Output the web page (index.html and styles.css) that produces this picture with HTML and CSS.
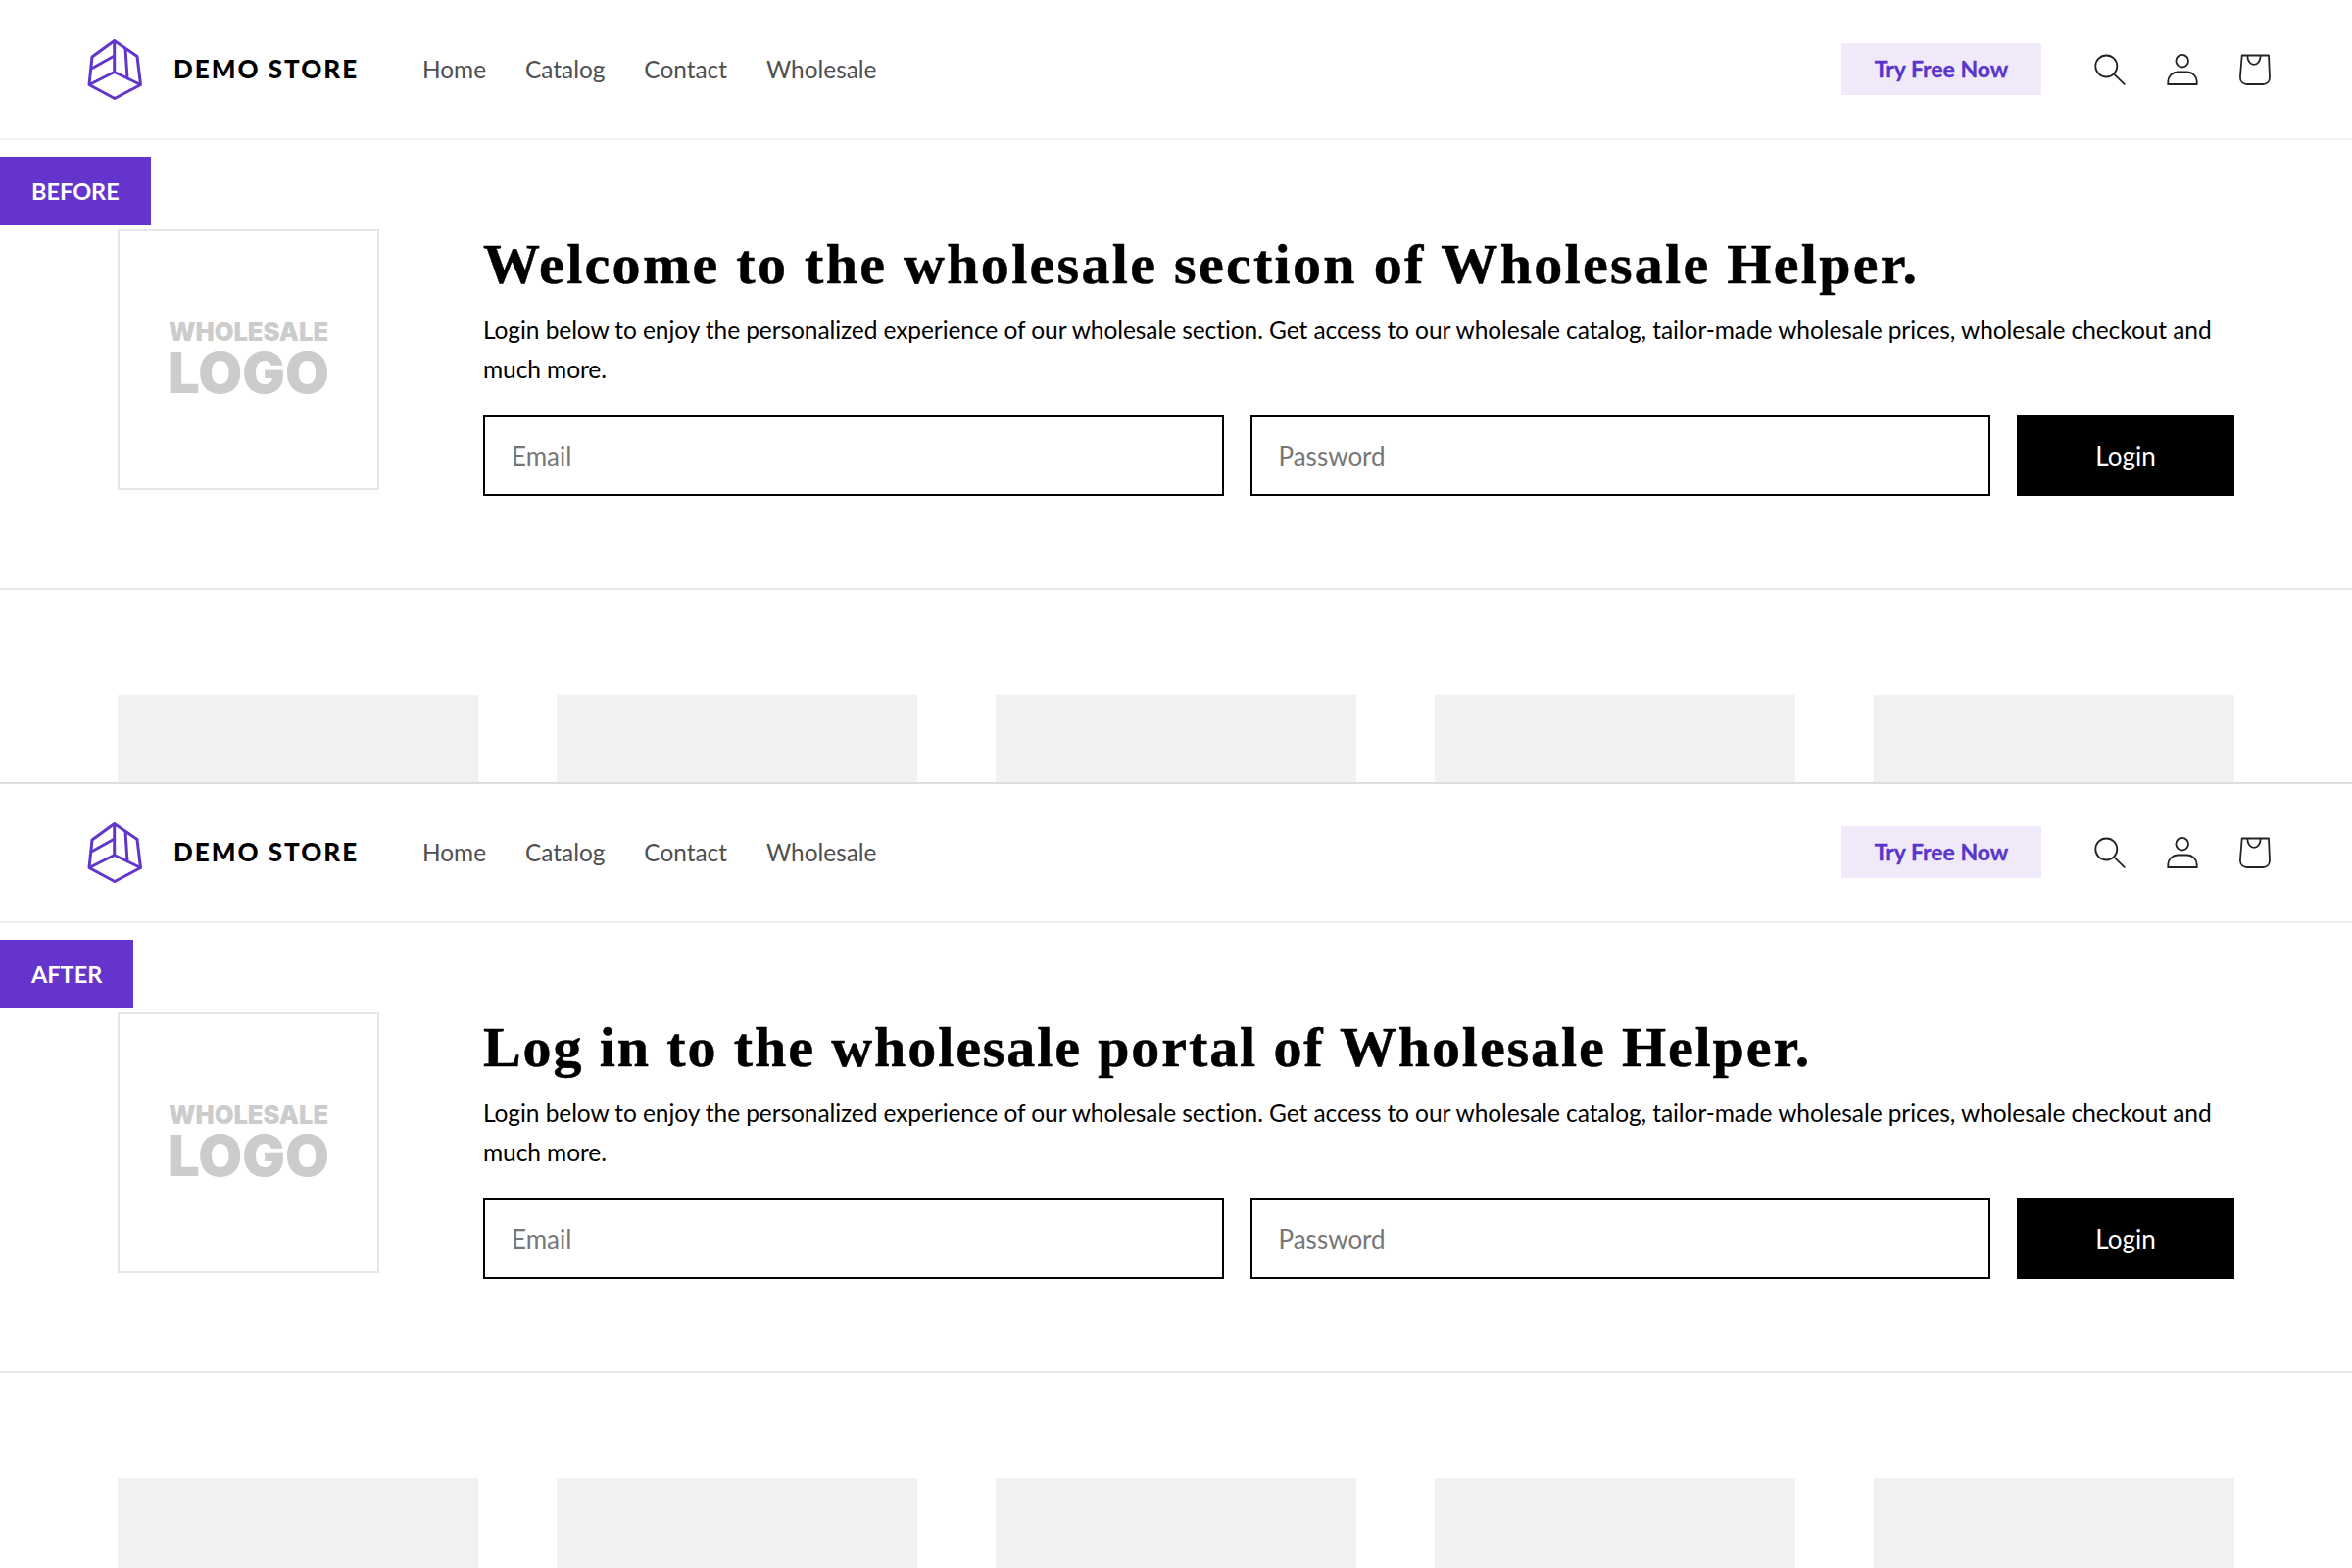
FILE: index.html
```html
<!DOCTYPE html>
<html lang="en">
<head>
    <meta charset="UTF-8">
    <meta name="viewport" content="width=device-width, initial-scale=1.0">
    <link rel="stylesheet" href="styles.css">
    <title>Wholesale login before and after</title>
</head>
<body>
    <svg class="sprites" width="0" height="0">
        <symbol id="icon-logo" viewBox="0 0 72 72">
            <path d="M36.700 7.500 60 23.500 63.500 52.500 37 66.500 11 52.500 14 24Z M36.700 7.500V39.500M11 52.500 36.700 39.500 63.500 52.500M12.500 36.500 36.700 23M48 15.500 50 46" fill="none" stroke="#6137c9" stroke-width="3" stroke-linejoin="round"/>
        </symbol>
        <symbol id="icon-search" viewBox="0 0 32 32">
            <circle cx="12.300" cy="12.500" r="11" fill="none" stroke="#222" stroke-width="1.800"/>
            <path d="M20.200 20.700 30.700 30.800" fill="none" stroke="#222" stroke-width="1.800" stroke-linecap="round"/>
        </symbol>
        <symbol id="icon-user" viewBox="0 0 32 32">
            <circle cx="15.700" cy="7.200" r="6.300" fill="none" stroke="#222" stroke-width="1.800"/>
            <path d="M1.300 31V28C1.300 23 6 18.500 11 18.500H21C26 18.500 30.700 23 30.700 28V31Z" fill="none" stroke="#222" stroke-width="1.800"/>
        </symbol>
        <symbol id="icon-bag" viewBox="0 0 32 32">
            <path d="M2.700 1.500H30L31 24C31 28.500 28 31 24 31H8C4 31 .9 28.500 .9 24Z" fill="none" stroke="#222" stroke-width="1.800" stroke-linejoin="round"/>
            <path d="M8.300 1.500C8.300 14 21.700 14 21.700 1.500" fill="none" stroke="#222" stroke-width="1.800"/>
        </symbol>
    </svg>

    <section class="panel panel-before">
        <div class="tag">BEFORE</div>
        <header class="topbar">
            <svg class="brand-mark"><use href="#icon-logo"></use></svg>
            <span class="brand-name">DEMO STORE</span>
            <nav class="menu">
                <a href="#">Home</a>
                <a href="#">Catalog</a>
                <a href="#">Contact</a>
                <a href="#">Wholesale</a>
            </nav>
            <a class="try-btn" href="#">Try Free Now</a>
            <div class="tools">
                <svg class="tool"><use href="#icon-search"></use></svg>
                <svg class="tool"><use href="#icon-user"></use></svg>
                <svg class="tool"><use href="#icon-bag"></use></svg>
            </div>
        </header>
        <div class="hero">
            <div class="logo-box">
                <span class="logo-small">WHOLESALE</span>
                <span class="logo-big">LOGO</span>
            </div>
            <div class="hero-main">
                <h1>Welcome to the wholesale section of Wholesale Helper.</h1>
                <p>Login below to enjoy the personalized experience of our wholesale section. Get access to our wholesale catalog, tailor-made wholesale prices, wholesale checkout and much more.</p>
                <form class="login">
                    <input type="text" placeholder="Email">
                    <input type="password" placeholder="Password">
                    <button type="button">Login</button>
                </form>
            </div>
        </div>
        <div class="cards">
            <div></div><div></div><div></div><div></div><div></div>
        </div>
    </section>

    <section class="panel panel-after">
        <div class="tag">AFTER</div>
        <header class="topbar">
            <svg class="brand-mark"><use href="#icon-logo"></use></svg>
            <span class="brand-name">DEMO STORE</span>
            <nav class="menu">
                <a href="#">Home</a>
                <a href="#">Catalog</a>
                <a href="#">Contact</a>
                <a href="#">Wholesale</a>
            </nav>
            <a class="try-btn" href="#">Try Free Now</a>
            <div class="tools">
                <svg class="tool"><use href="#icon-search"></use></svg>
                <svg class="tool"><use href="#icon-user"></use></svg>
                <svg class="tool"><use href="#icon-bag"></use></svg>
            </div>
        </header>
        <div class="hero">
            <div class="logo-box">
                <span class="logo-small">WHOLESALE</span>
                <span class="logo-big">LOGO</span>
            </div>
            <div class="hero-main">
                <h1>Log in to the wholesale portal of Wholesale Helper.</h1>
                <p>Login below to enjoy the personalized experience of our wholesale section. Get access to our wholesale catalog, tailor-made wholesale prices, wholesale checkout and much more.</p>
                <form class="login">
                    <input type="text" placeholder="Email">
                    <input type="password" placeholder="Password">
                    <button type="button">Login</button>
                </form>
            </div>
        </div>
        <div class="cards">
            <div></div><div></div><div></div><div></div><div></div>
        </div>
    </section>
</body>
</html>
```

FILE: styles.css
```css
* {
    box-sizing: border-box;
}

body {
    margin: 0;
    background: #fff;
    color: #000;
    font-family: Lato, "Open Sans", sans-serif;
    font-size: 25px;
}

.sprites {
    display: block;
    height: 0;
}

.panel {
    position: relative;
    overflow: hidden;
}

/* the second shot sits on the last pixel of the first one */
.panel-before {
    height: 800px;
    margin-bottom: -1px;
    border-bottom: 2px solid #dedede;
}

.panel-after {
    height: 801px;
}

.tag {
    position: absolute;
    left: 0;
    top: 160px;
    height: 70px;
    padding: 0 32px;
    line-height: 70px;
    background: #6434cc;
    color: #fff;
    font-size: 23.500px;
    font-weight: 700;
}

.topbar {
    display: flex;
    align-items: center;
    height: 143px;
    padding: 0 83px 0 80px;
    border-bottom: 2px solid #efefef;
}

.brand-mark {
    width: 72px;
    height: 72px;
    margin: 0 25px 2px 0;
}

.brand-name {
    width: 254px;
    margin-bottom: 2px;
    font-size: 26px;
    font-weight: 900;
    letter-spacing: 2px;
}

.menu {
    display: flex;
    gap: 40px;
    font-size: 24.400px;
}

.menu a {
    color: #4f4f4f;
    text-decoration: none;
}

.try-btn {
    margin-left: auto;
    width: 204px;
    height: 53px;
    line-height: 53px;
    text-align: center;
    background: #efe9fa;
    color: #5a35c9;
    font-size: 23px;
    font-weight: 700;
    text-decoration: none;
    -webkit-text-stroke: 0.3px #5a35c9;
}

.tools {
    display: flex;
    gap: 42px;
    margin-left: 54px;
}

.tool {
    display: block;
    width: 32px;
    height: 32px;
}

.hero {
    display: flex;
    gap: 106px;
    height: 459px;
    padding: 91px 120px 0;
    border-bottom: 2px solid #e8e8e8;
}

.logo-box {
    flex: none;
    display: flex;
    flex-direction: column;
    align-items: center;
    justify-content: center;
    width: 267px;
    height: 266px;
    padding-bottom: 3px;
    border: 2px solid #e6e6e6;
    color: #ccc;
    font-family: Inter, sans-serif;
    font-weight: 900;
}

.logo-small {
    font-size: 25.500px;
    line-height: 28px;
}

.logo-big {
    font-size: 58px;
    line-height: 54px;
}

.hero-main {
    flex: 1;
    padding-top: 4px;
}

h1 {
    margin: 0 0 15px;
    font-family: "Liberation Serif", serif;
    font-size: 58px;
    line-height: 64px;
    letter-spacing: 2.300px;
    -webkit-text-stroke: 0.5px #000;
}

.panel-after h1 {
    letter-spacing: 1.900px;
}

p {
    margin: 0 0 26px;
    font-size: 24.500px;
    letter-spacing: -0.075px;
    line-height: 40px;
}

.login {
    display: flex;
    gap: 27px;
}

.login input {
    flex: 1;
    height: 83px;
    padding: 0 27px;
    border: 2px solid #000;
    font: inherit;
    font-size: 26px;
}

.login input::placeholder {
    color: #777;
}

.login button {
    flex: none;
    width: 222px;
    height: 83px;
    border: 0;
    background: #000;
    color: #fff;
    font: inherit;
    font-size: 26px;
}

.cards {
    display: grid;
    grid-template-columns: repeat(5, 1fr);
    gap: 80px;
    padding: 107px 120px 0;
}

.cards div {
    height: 120px;
    background: #f1f1f1;
}
```
